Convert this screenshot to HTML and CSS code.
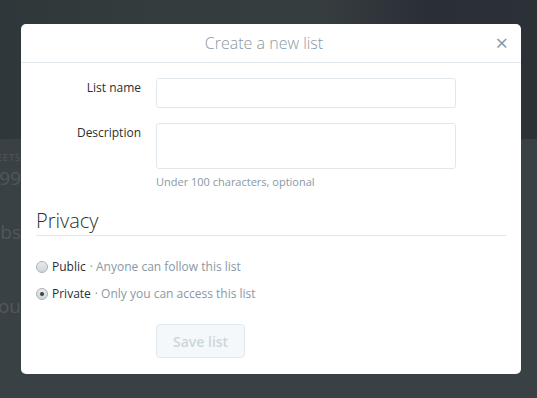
FILE: index.html
```html
<!DOCTYPE html>
<html lang="en">
<head>
    <meta charset="UTF-8">
    <title>Create a new list</title>
    <link rel="stylesheet" href="styles.css">
</head>
<body>
    <div class="page">
        <div class="cover"></div>
        <div class="stats">
            <div class="stat-label">TWEETS</div>
            <div class="stat-value">1,299</div>
            <div class="stat-more">Subs</div>
            <div class="stat-more low">You</div>
        </div>
    </div>

    <div class="modal">
        <div class="modal-header">
            <h3>Create a new list</h3>
            <span class="close">&times;</span>
        </div>
        <div class="modal-body">
            <div class="row">
                <label class="label">List name</label>
                <input class="field" type="text">
            </div>
            <div class="row">
                <label class="label">Description</label>
                <div>
                    <textarea class="field area"></textarea>
                    <p class="help">Under 100 characters, optional</p>
                </div>
            </div>
            <h2 class="privacy">Privacy</h2>
            <div class="radio"><span class="dot"></span>Public <span class="muted">&middot; Anyone can follow this list</span></div>
            <div class="radio"><span class="dot on"></span>Private <span class="muted">&middot; Only you can access this list</span></div>
            <div class="actions">
                <button class="save">Save list</button>
            </div>
        </div>
    </div>
</body>
</html>
```

FILE: styles.css
```css
body {
    margin: 0;
    font-family: "Open Sans", "Liberation Sans", sans-serif;
    background-color: #3a4145;
    overflow: hidden;
}
.page {
    height: 398px;
}
.cover {
    height: 139px;
    background: linear-gradient(90deg, #30373a 0%, #353c3e 30%, #363d3f 60%, #2a2f37 80%, #2c3136 100%);
}
.stats {
    width: 21px;
    overflow: hidden;
    direction: rtl;
    color: #50575b;
    white-space: nowrap;
}
.stat-label {
    font-size: 9px;
    line-height: 10px;
    margin-top: 14px;
    letter-spacing: 1px;
}
.stat-value {
    font-size: 19px;
    line-height: 24px;
    margin-top: 3px;
}
.stat-more {
    font-size: 19px;
    line-height: 24px;
    margin-top: 30px;
}
.stat-more.low {
    margin-top: 50px;
}
.modal {
    position: absolute;
    left: 21px;
    top: 24px;
    width: 500px;
    height: 350px;
    background-color: #fff;
    border-radius: 5px;
}
.modal-header {
    height: 38px;
    border-bottom: 1px solid #e1e8ed;
    position: relative;
    text-align: center;
}
.modal-header h3 {
    margin: 0;
    padding-right: 14px;
    font-size: 16px;
    font-weight: 300;
    line-height: 38px;
    color: #8899a6;
}
.close {
    position: absolute;
    right: 13px;
    top: 7px;
    font-size: 22px;
    line-height: 22px;
    color: #8899a6;
}
.modal-body {
    padding: 15px 15px 16px;
}
.row {
    display: flex;
    margin-bottom: 15px;
}
.label {
    width: 105px;
    margin-right: 15px;
    text-align: right;
    font-size: 12px;
    color: #292f33;
    padding-top: 1px;
}
.field {
    box-sizing: border-box;
    width: 300px;
    height: 30px;
    border: 1px solid #e1e8ed;
    border-radius: 3px;
    margin: 0;
    display: block;
    resize: none;
    font-family: inherit;
}
.area {
    height: 46px;
}
.help {
    margin: 5px 0 0;
    font-size: 11px;
    color: #8899a6;
}
.privacy {
    margin: 0;
    padding: 4px 0 1px;
    border-bottom: 1px solid #e1e8ed;
    font-size: 20px;
    font-weight: 300;
    color: #292f33;
    line-height: 26px;
}
.radio {
    display: flex;
    align-items: center;
    font-size: 12px;
    color: #292f33;
    height: 27px;
}
.privacy + .radio {
    margin-top: 17px;
}
.muted {
    color: #8899a6;
    margin-left: 4px;
}
.dot {
    box-sizing: border-box;
    width: 12px;
    height: 12px;
    border-radius: 50%;
    border: 1px solid #aab3ba;
    background: linear-gradient(#e9ecee, #cfd5d9);
    margin-right: 4px;
    position: relative;
}
.dot.on::after {
    content: "";
    position: absolute;
    left: 3px;
    top: 3px;
    width: 4px;
    height: 4px;
    border-radius: 50%;
    background-color: #3b4146;
}
.actions {
    padding-left: 120px;
    margin-top: 17px;
}
.save {
    height: 34px;
    padding: 0 16px;
    font-family: inherit;
    font-size: 14px;
    font-weight: 600;
    color: #ccd6dd;
    background-color: #f5f8fa;
    border: 1px solid #e1e8ed;
    border-radius: 4px;
}
```
